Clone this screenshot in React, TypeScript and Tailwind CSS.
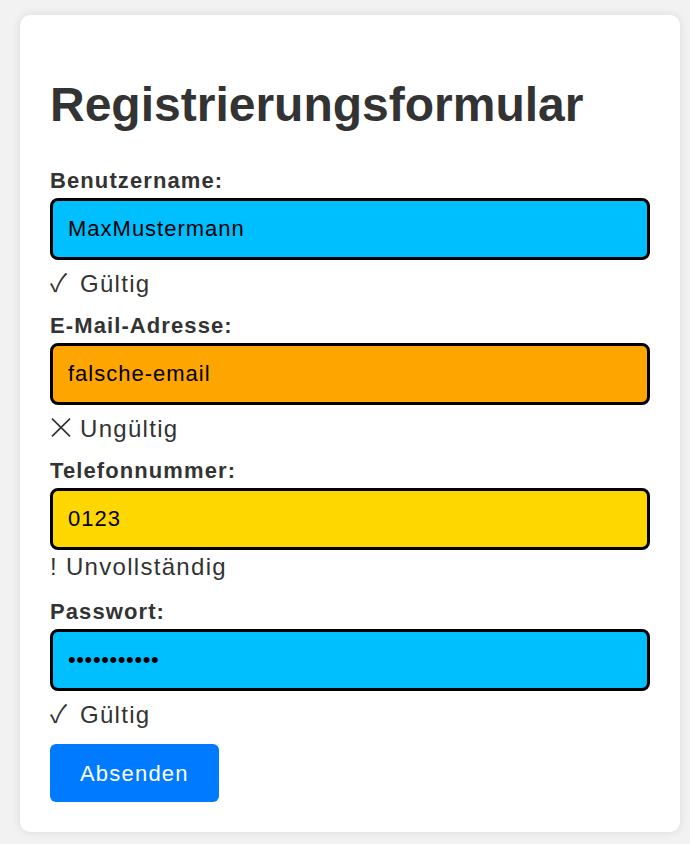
import React from 'react'

type Status = 'ok' | 'bad' | 'partial'

type Field = {
  label: string
  value: string
  type?: string
  bg: string
  status: Status
}

const fields: Field[] = [
  { label: 'Benutzername:', value: 'MaxMustermann', bg: 'bg-[#00bfff]', status: 'ok' },
  { label: 'E-Mail-Adresse:', value: 'falsche-email', bg: 'bg-[#ffa500]', status: 'bad' },
  { label: 'Telefonnummer:', value: '0123', bg: 'bg-[#ffd700]', status: 'partial' },
  { label: 'Passwort:', value: 'geheim12345', type: 'password', bg: 'bg-[#00bfff]', status: 'ok' },
]

const symbolFont = { fontFamily: '"Noto Sans CJK JP", "DejaVu Sans", sans-serif' }

function CrossIcon() {
  return (
    <svg
      role="img"
      aria-label="✕"
      width="20"
      height="19"
      viewBox="0 0 20 19"
      className="mr-[9px] ml-[1px] inline-block align-baseline"
    >
      <path d="M1 0.6 L19 18.4 M19 0.6 L1 18.4" stroke="#333" strokeWidth="1.7" fill="none" />
    </svg>
  )
}

function StatusLine({ status }: { status: Status }) {
  if (status === 'partial') {
    return (
      <div className="pt-[3px] pb-[4px] text-[24px] leading-[28px] tracking-[1.3px] text-[#333]">
        ! Unvollständig
      </div>
    )
  }
  if (status === 'bad') {
    return (
      <div className="pt-[10px] pb-[1px] text-[24px] leading-[28px] tracking-[1.3px] text-[#333]">
        <CrossIcon />
        Ungültig
      </div>
    )
  }
  return (
    <div className="pt-[10px] pb-[1px] text-[24px] leading-[28px] tracking-[1.3px] text-[#333]">
      <span className="inline-block w-[22px] text-[25px] leading-[0] tracking-normal" style={symbolFont}>
        ✓
      </span>{' '}
      Gültig
    </div>
  )
}

function FormField({ field }: { field: Field }) {
  const isPassword = field.type === 'password'
  return (
    <div className="mb-[14px] flex flex-col">
      <label className="mb-[5px] block text-[22px] font-bold leading-[25px] tracking-[1.1px] text-[#333]">
        {field.label}
      </label>
      <input
        readOnly
        type={field.type ?? 'text'}
        value={field.value}
        className={`h-[62px] w-full rounded-[8px] border-[3px] border-black px-[15px] text-[22px] text-black outline-none ${
          isPassword ? 'tracking-[0.6px]' : 'tracking-[1px]'
        } ${field.bg}`}
      />
      <StatusLine status={field.status} />
    </div>
  )
}

export default function App() {
  return (
    <div
      className="min-h-screen bg-[#f2f2f2] px-5 pt-[15px] pb-5"
      style={{ fontFamily: '"Liberation Sans", Arial, sans-serif' }}
    >
      <div className="w-[660px] rounded-[10px] bg-white p-[30px] shadow-[0_0_10px_rgba(0,0,0,0.1)]">
        <h1 className="mt-[32px] mb-[36px] text-[48px] font-bold leading-[55px] text-[#333]">
          Registrierungsformular
        </h1>
        <form className="flex flex-col">
          {fields.map((f) => (
            <FormField key={f.label} field={f} />
          ))}
          <div>
            <button
              type="button"
              className="h-[58px] rounded-[6px] bg-[#007bff] px-[30px] text-[22px] tracking-[1.2px] text-white"
            >
              Absenden
            </button>
          </div>
        </form>
      </div>
    </div>
  )
}
